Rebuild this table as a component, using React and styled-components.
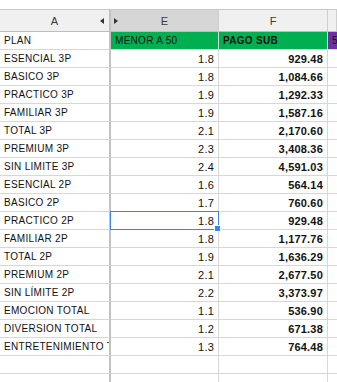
import React from "react";
import styled, { createGlobalStyle, css } from "styled-components";

const GlobalStyle = createGlobalStyle`
  html, body {
    margin: 0;
    padding: 0;
    background: #ffffff;
    overflow: hidden;
  }
  body {
    font-family: "Liberation Sans", Arial, sans-serif;
  }
`;

const rows = [
  ["ESENCIAL 3P", "1.8", "929.48"],
  ["BASICO 3P", "1.8", "1,084.66"],
  ["PRACTICO 3P", "1.9", "1,292.33"],
  ["FAMILIAR 3P", "1.9", "1,587.16"],
  ["TOTAL 3P", "2.1", "2,170.60"],
  ["PREMIUM 3P", "2.3", "3,408.36"],
  ["SIN LIMITE 3P", "2.4", "4,591.03"],
  ["ESENCIAL 2P", "1.6", "564.14"],
  ["BASICO 2P", "1.7", "760.60"],
  ["PRACTICO 2P", "1.8", "929.48", true],
  ["FAMILIAR 2P", "1.8", "1,177.76"],
  ["TOTAL 2P", "1.9", "1,636.29"],
  ["PREMIUM 2P", "2.1", "2,677.50"],
  ["SIN LÍMITE 2P", "2.2", "3,373.97"],
  ["EMOCION TOTAL", "1.1", "536.90"],
  ["DIVERSION TOTAL", "1.2", "671.38"],
  ["ENTRETENIMIENTO TOTAL", "1.3", "764.48"],
  ["", "", ""],
  ["", "", ""],
];

const Sheet = styled.div`
  width: 337px;
  height: 382px;
  overflow: hidden;
  display: flex;
  flex-direction: column;
`;

const FormulaStrip = styled.div`
  height: 9px;
  flex-shrink: 0;
  overflow: hidden;
  border-bottom: 1px solid #c8c8c8;
  padding-left: 11px;
  font-size: 11px;
  line-height: 11px;
  color: #222;
  span {
    display: block;
    margin-top: -9px;
  }
`;

const Grid = styled.div`
  display: grid;
  grid-template-columns: 111px 108px 109px 1fr;
  grid-auto-rows: 18px;
  grid-template-rows: 22px;
`;

const HeadCell = styled.div`
  position: relative;
  display: flex;
  align-items: center;
  justify-content: center;
  background: ${(p) => (p.$active ? "#d6d6d6" : "#f0f0f0")};
  border-right: 1px solid #cfcfcf;
  border-bottom: 1px solid #bdbdbd;
  font-size: 11px;
  color: #3a3a3a;
  ${(p) =>
    p.$frozen &&
    css`
      border-right: 2px solid #c2c2c2;
    `}
`;

const Arrow = styled.span`
  position: absolute;
  top: 8px;
  width: 0;
  height: 0;
  border-top: 3px solid transparent;
  border-bottom: 3px solid transparent;
  ${(p) =>
    p.$dir === "left"
      ? css`
          right: 5px;
          border-right: 4px solid #333;
        `
      : css`
          left: 3px;
          border-left: 4px solid #333;
        `}
`;

const Cell = styled.div`
  position: relative;
  display: flex;
  align-items: center;
  justify-content: ${(p) => (p.$num ? "flex-end" : "flex-start")};
  padding: ${(p) => (p.$num ? "0 4px 0 0" : "0 0 0 4px")};
  border-right: 1px solid #d7d7d7;
  border-bottom: 1px solid #d7d7d7;
  background: ${(p) => p.$bg || "#ffffff"};
  color: #111;
  font-size: ${(p) => (p.$num ? "11px" : "10px")};
  letter-spacing: ${(p) => (p.$num ? "0.2px" : "0.3px")};
  font-weight: ${(p) => (p.$bold ? 700 : 400)};
  white-space: nowrap;
  overflow: hidden;
  ${(p) =>
    p.$frozen &&
    css`
      border-right: 2px solid #c2c2c2;
    `}
  ${(p) =>
    p.$plain &&
    css`
      border-right: none;
    `}
  ${(p) =>
    p.$selected &&
    css`
      overflow: visible;
      z-index: 1;
      &::before {
        content: "";
        position: absolute;
        left: -1px;
        top: -1px;
        right: -1px;
        bottom: -1px;
        border: 1px solid #3c84e4;
      }
      &::after {
        content: "";
        position: absolute;
        right: -3px;
        bottom: -3px;
        width: 5px;
        height: 5px;
        background: #3c84e4;
        border: 1px solid #ffffff;
      }
    `}
`;

export default function App() {
  return (
    <Sheet>
      <GlobalStyle />
      <FormulaStrip>
        <span>115</span>
      </FormulaStrip>
      <Grid>
        <HeadCell $frozen>
          A
          <Arrow $dir="left" />
        </HeadCell>
        <HeadCell $active>
          E
          <Arrow $dir="right" />
        </HeadCell>
        <HeadCell>F</HeadCell>
        <HeadCell />

        <Cell $frozen>PLAN</Cell>
        <Cell $bg="#00b050">MENOR A 50</Cell>
        <Cell $bg="#00b050" $bold>
          PAGO SUB
        </Cell>
        <Cell $bg="#7030a0" $plain>
          5
        </Cell>

        {rows.map(([label, factor, pay, selected], i) => (
          <React.Fragment key={i}>
            <Cell $frozen>{label}</Cell>
            <Cell $num $selected={selected}>
              {factor}
            </Cell>
            <Cell $num $bold>
              {pay}
            </Cell>
            <Cell $plain />
          </React.Fragment>
        ))}
      </Grid>
    </Sheet>
  );
}
